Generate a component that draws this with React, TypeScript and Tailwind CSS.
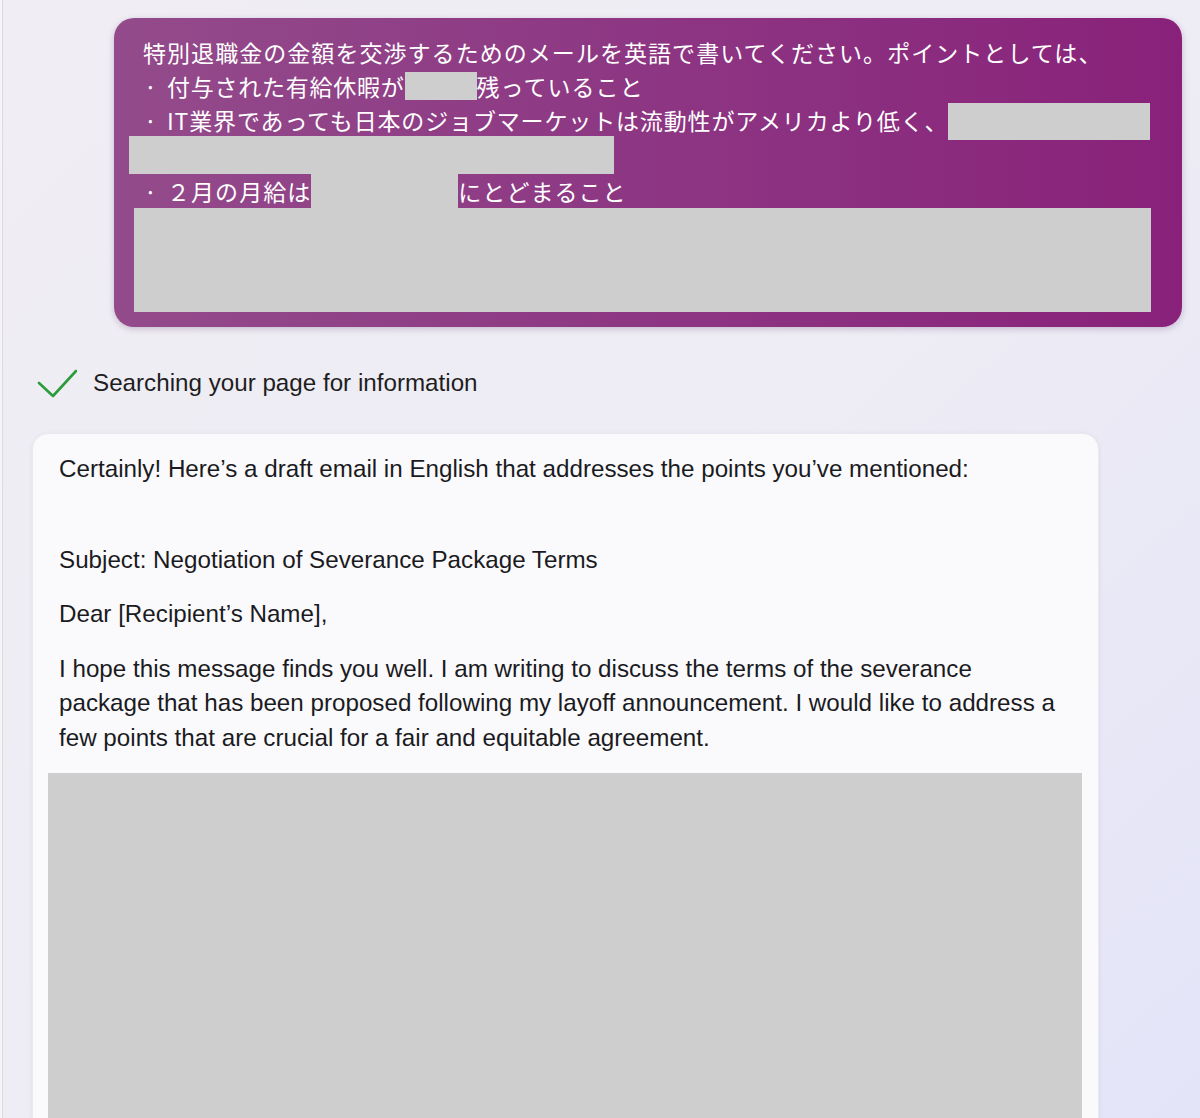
import React from "react";

const jp = { fontFamily: '"Noto Sans CJK JP", "Noto Sans", sans-serif' };
const en = { fontFamily: '"Liberation Sans", Arial, sans-serif' };

function Bullet() {
  return <span className="inline-block w-[24px] pl-[1px]">·</span>;
}

function Redact({ className }: { className: string }) {
  return <span className={`inline-block bg-[#cecece] ${className}`} />;
}

function PromptBubble() {
  return (
    <div
      className="ml-[111px] mt-[18px] w-[1068px] rounded-[20px] bg-gradient-to-r from-[#934b8b] via-[#8d3683] to-[#89217a] pl-[29px] pt-[17px] pb-[15px] text-white shadow-[0_2px_6px_rgba(80,40,90,0.25)]"
      style={jp}
    >
      <div className="text-[23px] leading-[34px] tracking-[1.05px]">
        <div className="h-[34px] whitespace-nowrap">
          特別退職金の金額を交渉するためのメールを英語で書いてください。ポイントとしては、
        </div>
        <div className="flex h-[34px] items-center whitespace-nowrap">
          <Bullet />
          <span className="tracking-[0.75px]">付与された有給休暇が</span>
          <Redact className="h-[28px] w-[72px]" />
          <span>残っていること</span>
        </div>
        <div className="flex h-[33px] items-center whitespace-nowrap">
          <Bullet />
          <span className="tracking-[0.85px]">IT業界であっても日本のジョブマーケットは流動性がアメリカより低く、</span>
          <Redact className="mt-[4px] h-[37px] w-[202px]" />
        </div>
        <div className="ml-[-14px] h-[38px] w-[485px] bg-[#cecece]" />
        <div className="flex h-[34px] items-center whitespace-nowrap">
          <Bullet />
          <span>２月の月給は</span>
          <Redact className="h-[34px] w-[147px]" />
          <span>にとどまること</span>
        </div>
        <div className="ml-[-9px] h-[104px] w-[1017px] bg-[#cecece]" />
      </div>
    </div>
  );
}

function Status() {
  return (
    <div className="ml-[34px] mt-[40px] flex h-[32px] items-center" style={en}>
      <svg width="40" height="30" viewBox="0 0 40 30" className="mr-[16px]">
        <path
          d="M2 15 L16 28 L39 3"
          fill="none"
          stroke="#2b9c3b"
          strokeWidth="2.6"
          strokeLinecap="round"
          strokeLinejoin="round"
        />
      </svg>
      <span className="text-[24.2px] text-[#1e1e22]">Searching your page for information</span>
    </div>
  );
}

function ReplyCard() {
  return (
    <div
      className="ml-[29px] mt-[34px] w-[1067px] flex-1 rounded-t-[16px] border border-[#ebe9ef] bg-[#fafafc] pl-[26px] pr-[16px] pt-[18px] shadow-[0_1px_4px_rgba(60,50,90,0.08)]"
      style={en}
    >
      <div className="text-[24.2px] leading-[34.5px] text-[#1b1b1f]">
        <p>Certainly! Here’s a draft email in English that addresses the points you’ve mentioned:</p>
        <p className="mt-[56px]">Subject: Negotiation of Severance Package Terms</p>
        <p className="mt-[20px]">Dear [Recipient’s Name],</p>
        <p className="mt-[20px] whitespace-nowrap">
          I hope this message finds you well. I am writing to discuss the terms of the severance
          <br />
          package that has been proposed following my layoff announcement. I would like to address a
          <br />
          few points that are crucial for a fair and equitable agreement.
        </p>
      </div>
      <div className="ml-[-11px] mt-[18px] h-[400px] w-[1034px] bg-[#cecece]" />
    </div>
  );
}

export default function App() {
  return (
    <div className="flex h-[1118px] w-full overflow-hidden bg-gradient-to-br from-[#f0eef4] via-[#eeecf4] to-[#e3e4f8]">
      <div className="w-[3px] shrink-0 border-r border-[#dcdae0] bg-[#f5f4f7]" />
      <div className="flex flex-1 flex-col">
        <PromptBubble />
        <Status />
        <ReplyCard />
      </div>
    </div>
  );
}
